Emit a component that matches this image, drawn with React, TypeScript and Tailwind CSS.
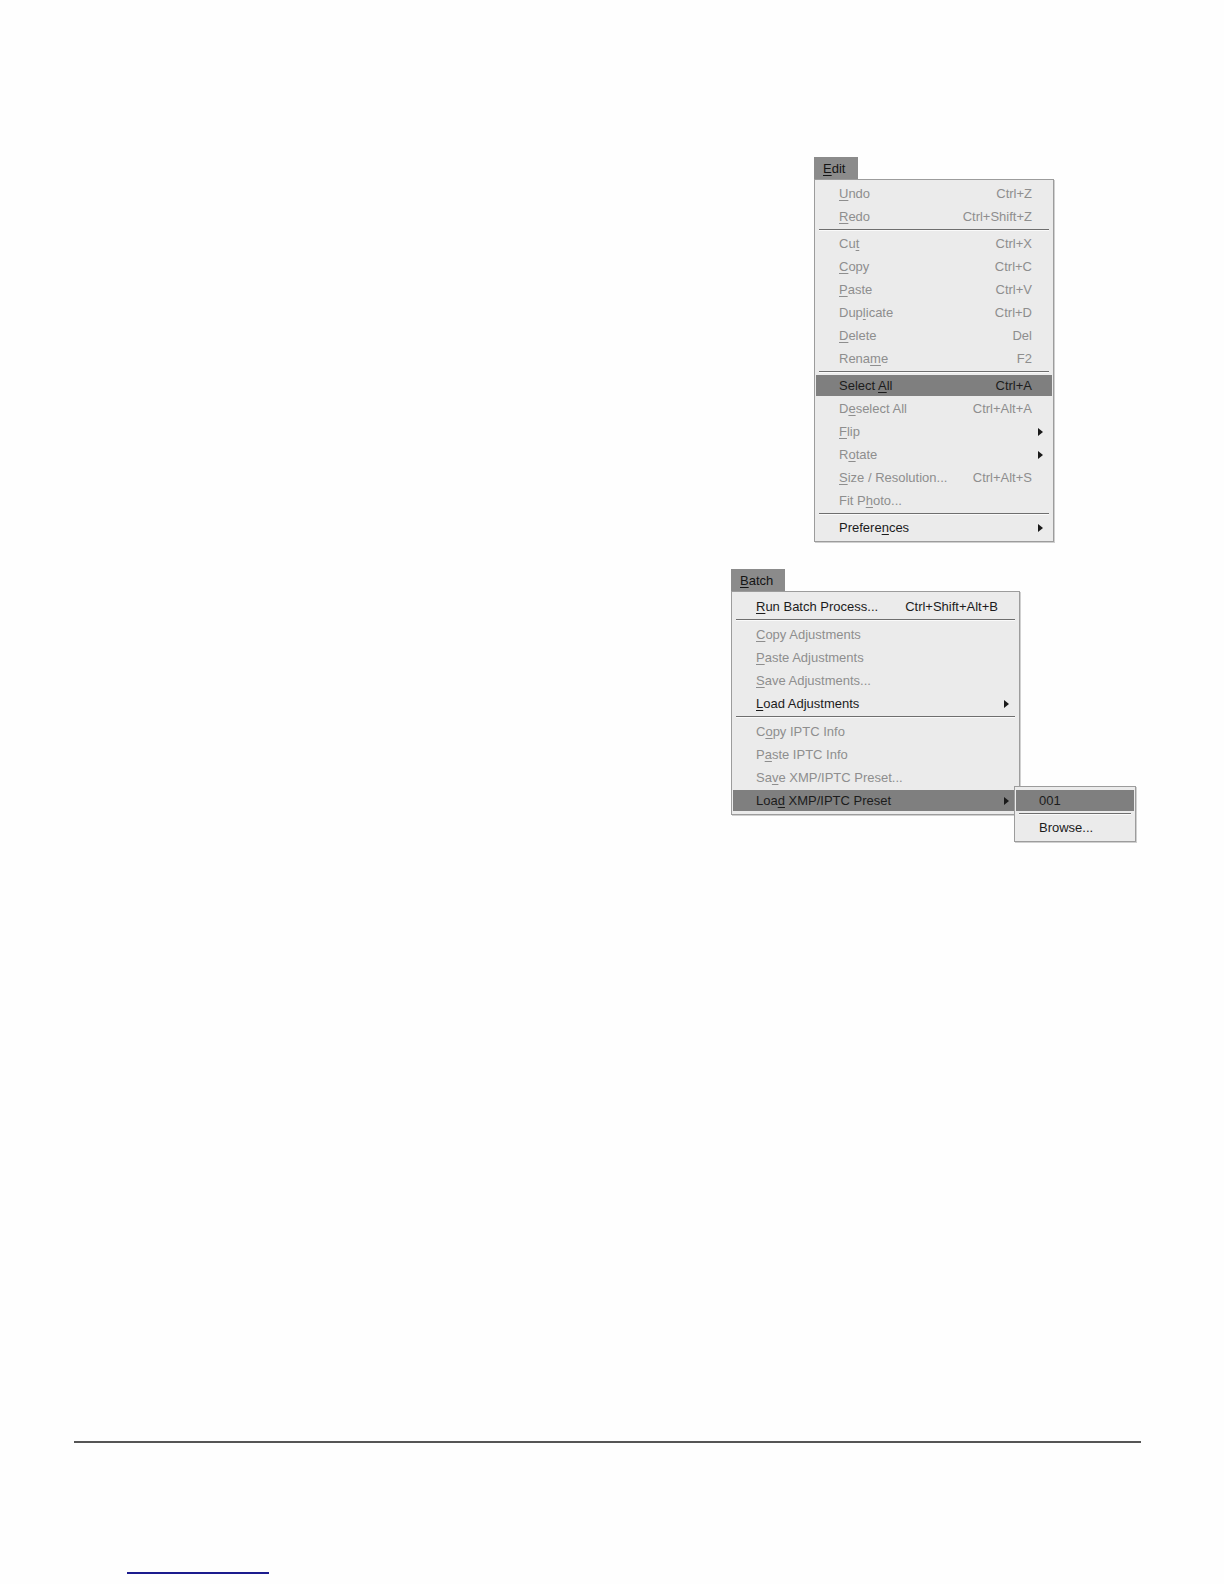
import React from "react";

type Item =
  | { sep: true }
  | {
      sep?: false;
      label: string;
      mn?: number;
      shortcut?: string;
      arrow?: boolean;
      enabled?: boolean;
      active?: boolean;
    };

const EDIT_ITEMS: Item[] = [
  { label: "Undo", mn: 0, shortcut: "Ctrl+Z" },
  { label: "Redo", mn: 0, shortcut: "Ctrl+Shift+Z" },
  { sep: true },
  { label: "Cut", mn: 2, shortcut: "Ctrl+X" },
  { label: "Copy", mn: 0, shortcut: "Ctrl+C" },
  { label: "Paste", mn: 0, shortcut: "Ctrl+V" },
  { label: "Duplicate", mn: 3, shortcut: "Ctrl+D" },
  { label: "Delete", mn: 0, shortcut: "Del" },
  { label: "Rename", mn: 4, shortcut: "F2" },
  { sep: true },
  { label: "Select All", mn: 7, shortcut: "Ctrl+A", enabled: true, active: true },
  { label: "Deselect All", mn: 1, shortcut: "Ctrl+Alt+A" },
  { label: "Flip", mn: 0, arrow: true },
  { label: "Rotate", mn: 1, arrow: true },
  { label: "Size / Resolution...", mn: 0, shortcut: "Ctrl+Alt+S" },
  { label: "Fit Photo...", mn: 5 },
  { sep: true },
  { label: "Preferences", mn: 7, arrow: true, enabled: true },
];

const BATCH_ITEMS: Item[] = [
  { label: "Run Batch Process...", mn: 0, shortcut: "Ctrl+Shift+Alt+B", enabled: true },
  { sep: true },
  { label: "Copy Adjustments", mn: 0 },
  { label: "Paste Adjustments", mn: 0 },
  { label: "Save Adjustments...", mn: 0 },
  { label: "Load Adjustments", mn: 0, arrow: true, enabled: true },
  { sep: true },
  { label: "Copy IPTC Info", mn: 1 },
  { label: "Paste IPTC Info", mn: 1 },
  { label: "Save XMP/IPTC Preset...", mn: 2 },
  { label: "Load XMP/IPTC Preset", mn: 3, arrow: true, enabled: true, active: true },
];

const PRESET_ITEMS: Item[] = [
  { label: "001", enabled: true, active: true },
  { sep: true },
  { label: "Browse...", enabled: true },
];

function Label({ text, mn }: { text: string; mn?: number }) {
  if (mn === undefined) return <>{text}</>;
  return (
    <>
      {text.slice(0, mn)}
      <span className="underline underline-offset-2">{text[mn]}</span>
      {text.slice(mn + 1)}
    </>
  );
}

function Arrow() {
  return (
    <svg width="5" height="8" viewBox="0 0 5 8" className="block">
      <path d="M0 0 L5 4 L0 8 Z" fill="#1a1a1a" />
    </svg>
  );
}

function Menu({
  items,
  width,
  submenu,
  tall,
}: {
  items: Item[];
  width: number;
  submenu?: React.ReactNode;
  tall?: boolean;
}) {
  return (
    <div
      className={`border border-[#9c9c9c] bg-[#ebebeb] pb-[2px] shadow-[1px_1px_0_#d0d0d0] ${
        tall ? "pt-[3px]" : "pt-[2px]"
      }`}
      style={{ width }}
    >
      {items.map((it, i) => {
        if (it.sep) {
          return (
            <div key={i} className={`mx-[4px] pt-[1px] ${tall ? "h-[5px]" : "h-[4px]"}`}>
              <div className="h-[1px] bg-[#6e6e6e]" />
              <div className="h-[1px] bg-[#fafafa]" />
            </div>
          );
        }
        const color = it.enabled ? "text-[#1c1c1c]" : "text-[#8e8e8e]";
        return (
          <div key={i} className="relative h-[23px] py-[1px] px-[1px]">
            <div
              className={`flex h-full items-center pl-[23px] ${color} ${
                it.active ? "bg-[#7f7f7f]" : ""
              }`}
            >
              <span className="flex-1 whitespace-nowrap">
                <Label text={it.label} mn={it.mn} />
              </span>
              {it.shortcut && <span className="whitespace-nowrap">{it.shortcut}</span>}
              <span className="flex w-[20px] justify-start pl-[6px]">{it.arrow && <Arrow />}</span>
            </div>
            {it.active && submenu}
          </div>
        );
      })}
    </div>
  );
}

function MenuBlock({
  title,
  mn,
  tabWidth,
  children,
}: {
  title: string;
  mn: number;
  tabWidth: number;
  children: React.ReactNode;
}) {
  return (
    <div>
      <div
        className="flex h-[22px] items-center bg-[#8b8b8b] pl-[9px] text-[#141414]"
        style={{ width: tabWidth }}
      >
        <Label text={title} mn={mn} />
      </div>
      {children}
    </div>
  );
}

export default function App() {
  return (
    <div
      className="h-[1584px] w-[1224px] overflow-hidden bg-[#fefefe] text-[13px] leading-none"
      style={{ fontFamily: '"Liberation Sans", Arial, sans-serif' }}
    >
      <div className="pl-[814px] pt-[157px]">
        <MenuBlock title="Edit" mn={0} tabWidth={44}>
          <Menu items={EDIT_ITEMS} width={240} />
        </MenuBlock>
      </div>

      <div className="pl-[731px] pt-[27px]">
        <MenuBlock title="Batch" mn={0} tabWidth={54}>
          <Menu
            items={BATCH_ITEMS}
            width={289}
            tall
            submenu={
              <div className="absolute left-[282px] top-[-3px] z-10">
                <Menu items={PRESET_ITEMS} width={122} />
              </div>
            }
          />
        </MenuBlock>
      </div>

      <div className="ml-[74px] mt-[626px] h-[2px] w-[1067px] bg-[#555555]" />
      <div className="ml-[127px] mt-[129px] h-[2px] w-[142px] bg-[#1c1c8e]" />
    </div>
  );
}
